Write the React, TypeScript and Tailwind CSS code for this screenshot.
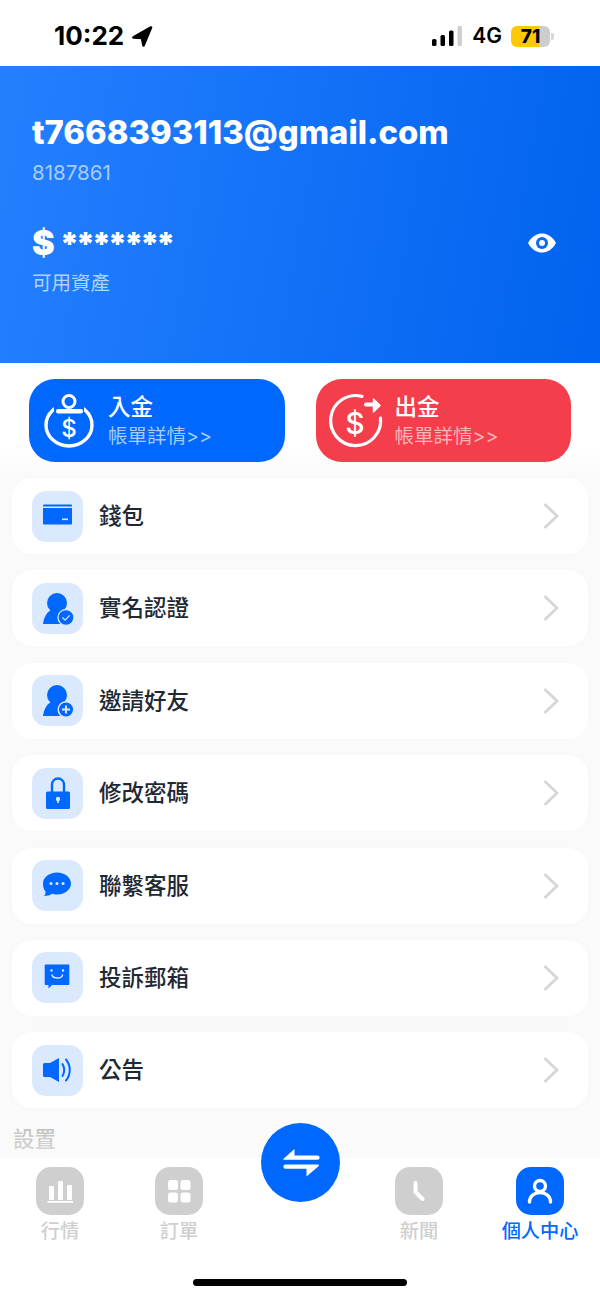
import { ReactNode } from "react";

const FONT = "font-['Inter','Noto_Sans_CJK_TC','Noto_Sans',sans-serif]";

function Tile({ children }: { children: ReactNode }) {
  return (
    <div className="w-[51px] h-[51px] shrink-0 rounded-[14px] bg-[#dbe9ff] flex items-center justify-center">
      <svg width="51" height="51" viewBox="0 0 51 51">
        {children}
      </svg>
    </div>
  );
}

const BLUE = "#0068ff";
const TILE = "#dbe9ff";

const walletIcon = (
  <>
    <path d="M11 14.500a1 1 0 0 1 1-1h27a1 1 0 0 1 1 1v1H11z" fill={BLUE} />
    <path d="M11 17h29v15.500a1 1 0 0 1-1 1H12a1 1 0 0 1-1-1z" fill={BLUE} />
    <rect x="30" y="27.500" width="6" height="1.600" fill={TILE} />
  </>
);

const person = (
  <>
    <circle cx="25" cy="20" r="10" fill={BLUE} />
    <path d="M11 41c.8-6 3-11 8-14h12c3 2 6 5 7 9v5z" fill={BLUE} />
  </>
);

const verifyIcon = (
  <>
    {person}
    <circle cx="34" cy="34.500" r="8" fill={BLUE} stroke={TILE} strokeWidth="1.300" />
    <path d="M30.500 34.500l2.600 2.600 4.500-4.800" fill="none" stroke={TILE} strokeWidth="1.200" />
  </>
);

const inviteIcon = (
  <>
    {person}
    <circle cx="34" cy="34.500" r="7.800" fill={BLUE} stroke={TILE} strokeWidth="1.500" />
    <path d="M34 30.500v8M30 34.500h8" fill="none" stroke={TILE} strokeWidth="2" />
  </>
);

const lockIcon = (
  <>
    <path d="M20 24v-7.500a6 6 0 0 1 12 0v7.500" fill="none" stroke={BLUE} strokeWidth="2.400" />
    <rect x="14" y="23.500" width="24" height="17.500" rx="1.500" fill={BLUE} />
    <circle cx="26" cy="31" r="2.200" fill={TILE} />
    <rect x="25.200" y="31.500" width="1.600" height="3.500" fill={TILE} />
  </>
);

const chatIcon = (
  <>
    <path d="M25 12.500c8 0 14 5 14 11s-6 11-14 11c-2 0-3.500-.3-5-.8-2 1.300-4.500 2.300-8 2.300 1.200-1.300 1.800-2.800 1.500-4.500-2-2-2.500-5-2.500-8 0-6 6-11 14-11z" fill={BLUE} />
    <circle cx="19" cy="23.500" r="1.500" fill={TILE} />
    <circle cx="25" cy="23.500" r="1.500" fill={TILE} />
    <circle cx="31" cy="23.500" r="1.500" fill={TILE} />
  </>
);

const mailIcon = (
  <>
    <path d="M13.500 12.500h23a.8.800 0 0 1 .8.800v19a.8.800 0 0 1-.8.800H20l-3.500 3.400v-3.400h-3a.8.800 0 0 1-.8-.8v-19a.8.800 0 0 1 .8-.8z" fill={BLUE} />
    <circle cx="19.500" cy="18.500" r="1.200" fill={TILE} />
    <circle cx="31" cy="18.500" r="1.200" fill={TILE} />
    <path d="M20 23c1 4 10 4 10.500 0" fill="none" stroke={TILE} strokeWidth="1.500" strokeLinecap="round" />
  </>
);

const speakerIcon = (
  <>
    <path d="M11 19.500a1.500 1.500 0 0 1 1.500-1.500H18l9-5v24l-9-5h-5.500a1.500 1.500 0 0 1-1.500-1.500z" fill={BLUE} />
    <path d="M30.500 19c2 3.500 2 8.500 0 12" fill="none" stroke={BLUE} strokeWidth="2" strokeLinecap="round" />
    <path d="M34 14.500c5 6 5 15 0 21" fill="none" stroke={BLUE} strokeWidth="2" strokeLinecap="round" />
  </>
);

const menu = [
  { label: "錢包", icon: walletIcon },
  { label: "實名認證", icon: verifyIcon },
  { label: "邀請好友", icon: inviteIcon },
  { label: "修改密碼", icon: lockIcon },
  { label: "聯繫客服", icon: chatIcon },
  { label: "投訴郵箱", icon: mailIcon },
  { label: "公告", icon: speakerIcon },
];

function StatusBar() {
  return (
    <div className="h-[66px] bg-white flex items-start justify-between pt-[21px] pl-[54px] pr-[46px]">
      <div className="flex items-center gap-[7px]">
        <span className="text-[26px] leading-[30px] font-bold text-black">10:22</span>
        <svg width="22" height="22" viewBox="0 0 22 22">
          <path d="M20 2.500 2.500 12.500l8.500.5 1.500 7.500z" fill="#000" stroke="#000" strokeWidth="2.600" strokeLinejoin="round" />
        </svg>
      </div>
      <div className="flex items-center h-[30px]">
        <svg width="31" height="20" viewBox="0 0 31 20">
          <rect x="1" y="13" width="4.500" height="7" rx="1.500" fill="#000" />
          <rect x="9.500" y="9" width="4.500" height="11" rx="1.500" fill="#000" />
          <rect x="18" y="4.500" width="4.500" height="15.500" rx="1.500" fill="#000" />
          <rect x="26.500" y="0" width="4.500" height="20" rx="1" fill="#cfcfcf" />
        </svg>
        <span className="ml-[10px] text-[21px] leading-[30px] font-semibold text-black">4G</span>
        <div className="ml-[9px] w-[39px] h-[21px] rounded-[6px] bg-[linear-gradient(90deg,#ffc800_0,#ffc800_73%,#cdcdcd_73%,#cdcdcd_100%)] flex items-center justify-center">
          <span className="text-[19px] leading-none font-extrabold text-black">71</span>
        </div>
        <div className="ml-[1px] w-[3px] h-[7px] rounded-r-[2px] bg-[#d6d6d6]" />
      </div>
    </div>
  );
}

function Hero() {
  return (
    <div className="h-[297px] bg-[linear-gradient(100deg,#2580ff_0%,#0062ee_100%)] pl-[32px] pr-[44px] pt-[47px] text-white">
      <div className="text-[32.800px] leading-[38px] font-extrabold">t7668393113@gmail.com</div>
      <div className="mt-[10px] text-[20.500px] leading-[24px] text-[#a9cbff]">8187861</div>
      <div className="mt-[37px] flex items-center justify-between">
        <div className="flex items-start">
          <span className="text-[34px] leading-[42px] font-black">$</span>
          <span className="ml-[5px] mt-[5px] text-[32px] leading-[34px] font-black tracking-[-3.400px]">*******</span>
        </div>
        <svg width="28" height="20" viewBox="0 0 28 20">
          <path d="M0 10C4 3 9 .5 14 .5S24 3 28 10c-4 7-9 9.500-14 9.500S4 17 0 10z" fill="#fff" />
          <circle cx="14" cy="10" r="6" fill="#0a6af5" />
          <circle cx="14" cy="10" r="3" fill="#fff" />
        </svg>
      </div>
      <div className="mt-[7px] text-[19.500px] leading-[24px] text-[#b3d1ff]">可用資產</div>
    </div>
  );
}

function DepositIcon() {
  return (
    <svg width="50" height="56" viewBox="0 0 50 56" className="shrink-0">
      <ellipse cx="25" cy="32" rx="23" ry="21" fill="none" stroke="#fff" strokeWidth="3.400" />
      <rect x="10" y="10" width="30" height="8" fill={BLUE} />
      <circle cx="25" cy="8.500" r="6" fill={BLUE} stroke="#fff" strokeWidth="3" />
      <rect x="12" y="16" width="27" height="4.500" rx="2" fill="#fff" />
      <text x="25" y="44" textAnchor="middle" fill="#fff" fontSize="24" fontWeight="500" fontFamily="Inter">$</text>
    </svg>
  );
}

function WithdrawIcon() {
  return (
    <svg width="53" height="56" viewBox="0 0 53 56" className="shrink-0 overflow-visible">
      <path d="M34 3.400A25 25 0 1 0 52.500 25" fill="none" stroke="#fff" strokeWidth="3.200" strokeLinecap="round" />
      <path d="M38 11.500h8" fill="none" stroke="#fff" strokeWidth="4" strokeLinecap="round" />
      <path d="M45.500 6l6.500 6.500-6.500 6.500z" fill="#fff" stroke="#fff" strokeWidth="1.500" strokeLinejoin="round" />
      <text x="27" y="41" textAnchor="middle" fill="#fff" fontSize="30" fontWeight="500" fontFamily="Inter">$</text>
    </svg>
  );
}

function ActionButton({ bg, icon, title, sub, subColor, pad }: { bg: string; icon: ReactNode; title: string; sub: string; subColor: string; pad: string }) {
  return (
    <div className={`w-[255.500px] h-[83px] rounded-[26px] flex items-center ${bg} ${pad}`}>
      {icon}
      <div className="ml-[14px] flex flex-col">
        <span className="text-[22.500px] leading-[28px] font-medium text-white">{title}</span>
        <span className={`mt-[3px] text-[19.500px] leading-[24px] ${subColor}`}>{sub}</span>
      </div>
    </div>
  );
}

function MenuRow({ label, icon }: { label: string; icon: ReactNode }) {
  return (
    <div className="h-[76px] rounded-[20px] bg-white flex items-center pl-[20px] pr-[28px] shadow-[0_0_6px_rgba(0,0,0,0.015)]">
      <Tile>{icon}</Tile>
      <span className="ml-[16px] flex-1 text-[22.500px] leading-[30px] font-medium text-[#1f2933]">{label}</span>
      <svg width="18" height="28" viewBox="0 0 18 28">
        <path d="M2.500 2 15 14 2.500 26" fill="none" stroke="#d6d6d6" strokeWidth="2.800" />
      </svg>
    </div>
  );
}

function NavIcon({ children, active }: { children: ReactNode; active?: boolean }) {
  return (
    <div className={`w-[48px] h-[48px] rounded-[15px] flex items-center justify-center ${active ? "bg-[#0068ff]" : "bg-[#cfcfcf]"}`}>
      <svg width="48" height="48" viewBox="0 0 48 48">
        {children}
      </svg>
    </div>
  );
}

function NavItem({ label, active, className, children }: { label: string; active?: boolean; className: string; children: ReactNode }) {
  return (
    <div className={`flex flex-col items-center ${className}`}>
      <NavIcon active={active}>{children}</NavIcon>
      <span className={`mt-[3px] text-[19.200px] leading-[26px] font-medium whitespace-nowrap ${active ? "text-[#0068ff]" : "text-[#cfcfcf]"}`}>{label}</span>
    </div>
  );
}

function BottomNav() {
  return (
    <div className="absolute inset-x-0 bottom-0 h-[188px]">
      <div className="h-[48px] bg-[linear-gradient(180deg,rgba(250,250,250,0),rgba(250,250,250,0.6))]" />
      <div className="relative h-[140px] bg-white pt-[9px] flex">
        <NavItem label="行情" className="w-[48px] ml-[36px]">
          <rect x="13" y="19" width="5" height="14" rx="1" fill="#fff" />
          <rect x="22" y="14" width="5" height="19" rx="1" fill="#fff" />
          <rect x="31" y="18" width="5" height="15" rx="1" fill="#fff" />
          <rect x="11.500" y="34" width="25.500" height="1.800" fill="#fff" />
        </NavItem>
        <NavItem label="訂單" className="w-[48px] ml-[71px]">
          <rect x="13" y="13" width="10" height="10" rx="2.500" fill="#fff" />
          <rect x="25.500" y="13" width="10" height="10" rx="2.500" fill="#fff" />
          <rect x="13" y="25.500" width="10" height="10" rx="2.500" fill="#fff" />
          <rect x="25.500" y="25.500" width="10" height="10" rx="2.500" fill="#fff" />
        </NavItem>
        <NavItem label="新聞" className="w-[48px] ml-[192px]">
          <path d="M20.500 16v9l7 7" fill="none" stroke="#fff" strokeWidth="4" strokeLinecap="round" />
        </NavItem>
        <NavItem label="個人中心" active className="w-[48px] ml-[73px]">
          <circle cx="24" cy="19" r="5.500" fill="none" stroke="#fff" strokeWidth="3.400" />
          <path d="M13.500 35c0-6 5-9.500 10.500-9.500S34.500 29 34.500 35" fill="none" stroke="#fff" strokeWidth="3.400" strokeLinecap="round" />
        </NavItem>
        <div className="absolute left-[193px] top-[121px] w-[214px] h-[7px] rounded-full bg-black" />
      </div>
      <div className="absolute left-[261px] top-[13px] w-[79px] h-[79px] rounded-full bg-[#0068ff] flex items-center justify-center">
        <svg width="40" height="28" viewBox="0 0 40 28">
          <path d="M2.200 10 13.500 0v6.500h23a2.150 2.150 0 0 1 0 4.300H3a.8.800 0 0 1-.8-.8z" fill="#fff" />
          <path d="M4.500 15.500h33.300v1.500L25.500 27.500v-7.700H4.500a2.150 2.150 0 0 1 0-4.300z" fill="#fff" />
        </svg>
      </div>
    </div>
  );
}

export default function App() {
  return (
    <div className={`relative w-[600px] h-[1298px] overflow-hidden bg-[#fafafa] ${FONT}`}>
      <StatusBar />
      <Hero />
      <div className="pt-[16px] pb-[16px] px-[29px] flex justify-between bg-[linear-gradient(180deg,#fff_70%,#fafafa_100%)]">
        <ActionButton bg="bg-[#0068ff]" pad="pl-[15px]" icon={<DepositIcon />} title="入金" sub="帳單詳情>>" subColor="text-[#a6cbff]" />
        <ActionButton bg="bg-[#f53e4b]" pad="pl-[12px]" icon={<WithdrawIcon />} title="出金" sub="帳單詳情>>" subColor="text-[#fdb4ba]" />
      </div>
      <div className="px-[12px] flex flex-col gap-[16.400px]">
        {menu.map((m) => (
          <MenuRow key={m.label} label={m.label} icon={m.icon} />
        ))}
      </div>
      <div className="mt-[17px] pl-[13px] text-[21.500px] leading-[28px] font-medium text-[#b0b0b0]">設置</div>
      <BottomNav />
    </div>
  );
}
